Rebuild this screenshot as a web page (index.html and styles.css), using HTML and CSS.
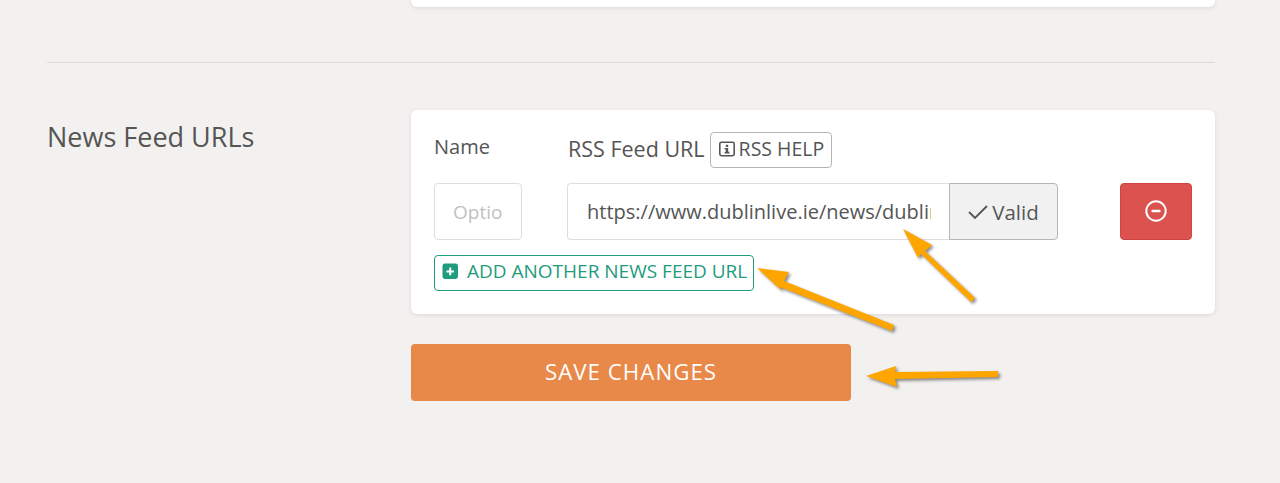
FILE: index.html
```html
<!DOCTYPE html>
<html lang="en">
<head>
    <meta charset="UTF-8">
    <meta name="viewport" content="width=device-width, initial-scale=1.0">
    <title>News Feed URLs</title>
    <link rel="stylesheet" href="styles.css">
</head>
<body>
    <div class="container">
        <div class="card-stub"></div>
        <hr class="divider">

        <div class="section">
            <h2 class="section-title">News Feed URLs</h2>

            <div class="section-body">
                <div class="card">
                    <div class="feed-grid">
                        <label class="field-label" for="feedName">Name</label>
                        <div class="url-label-row">
                            <label class="field-label url-label" for="feedUrl">RSS Feed URL</label>
                            <button class="btn-help" type="button">
                                <svg class="icon" width="16" height="16" viewBox="0 0 16 16">
                                    <rect x="0.8" y="1.3" width="14.4" height="13.4" rx="1.6" fill="none" stroke="currentColor" stroke-width="1.6"/>
                                    <rect x="6.8" y="3.8" width="2.4" height="2.2" fill="currentColor"/>
                                    <path d="M5.6 7h3.6v3.8h1.2v1.6H5.6v-1.6h1.2V8.6H5.6z" fill="currentColor"/>
                                </svg>
                                RSS HELP
                            </button>
                        </div>
                        <div></div>

                        <input class="text-input name-input" id="feedName" type="text" placeholder="Optional">
                        <div class="url-group">
                            <input class="text-input url-input" id="feedUrl" type="text" value="https://www.dublinlive.ie/news/dublin-news/?service=rss">
                            <span class="valid-tag">
                                <svg class="icon" width="20" height="16" viewBox="0 0 20 16">
                                    <path d="M1 8l6 6L19 2" fill="none" stroke="currentColor" stroke-width="1.8"/>
                                </svg>
                                Valid
                            </span>
                        </div>
                        <button class="btn-remove" type="button" aria-label="Remove">
                            <svg width="24" height="24" viewBox="0 0 24 24">
                                <circle cx="12" cy="12" r="9.7" fill="none" stroke="currentColor" stroke-width="2"/>
                                <rect x="7.5" y="10.8" width="9" height="2.4" rx="0.6" fill="currentColor"/>
                            </svg>
                        </button>
                    </div>

                    <button class="btn-add" type="button">
                        <svg class="icon" width="16" height="16" viewBox="0 0 16 16">
                            <rect x="0.5" y="0.5" width="15.5" height="15.5" rx="2.4" fill="currentColor"/>
                            <path d="M7.2 4.6h2v2.8H12v2H9.2v2.8h-2V9.4H4.4v-2h2.8z" fill="#fff"/>
                        </svg>
                        ADD ANOTHER NEWS FEED URL
                    </button>
                </div>

                <button class="btn-save" type="button">SAVE CHANGES</button>
            </div>
        </div>
    </div>

    <!-- annotation arrows drawn over the screenshot -->
    <svg class="arrows" width="1280" height="483" viewBox="0 0 1280 483">
        <polygon points="903,229 932,245 925,251 975,298 971,302 921,254 918,258"/>
        <polygon points="757,268 789,272 784,281 894,325 892,331 780,287 782,291"/>
        <polygon points="866,376 896,366 895,372 998,371 998,377 895,379 897,387"/>
    </svg>
</body>
</html>
```

FILE: styles.css
```css
* {
    box-sizing: border-box;
}
body {
    margin: 0;
    height: 483px;
    overflow: hidden;
    background-color: #f2f1ef;
    color: #555;
    font-family: "Open Sans", Arial, sans-serif;
}
button, input {
    font-family: inherit;
}
.container {
    width: 1168px;
    margin-left: 47px;
}
.card-stub {
    height: 7px;
    margin-left: 364px;
    background-color: white;
    border-radius: 0 0 6px 6px;
    box-shadow: 0 1px 4px rgba(0, 0, 0, 0.1);
}
.divider {
    height: 1px;
    margin: 55px 0 47px;
    border: none;
    background-color: #dcdcdc;
}
.section {
    display: flex;
}
.section-title {
    width: 364px;
    margin: 12px 0 0;
    font-size: 27px;
    font-weight: 400;
    line-height: 30px;
}
.section-body {
    width: 804px;
}
.card {
    padding: 22px 23px 23px;
    background-color: white;
    border-radius: 6px;
    box-shadow: 0 1px 4px rgba(0, 0, 0, 0.1);
}
.feed-grid {
    display: grid;
    grid-template-columns: 88px 491px 1fr;
    column-gap: 45px;
    row-gap: 15px;
}
.field-label {
    font-size: 20px;
    line-height: 30px;
}
.url-label-row {
    display: flex;
    align-items: center;
    gap: 5px;
}
.url-label {
    margin: 0 0 3px 1px;
    font-size: 21.5px;
}
.icon {
    flex-shrink: 0;
}
.btn-help {
    display: flex;
    align-items: center;
    gap: 4px;
    width: 122px;
    height: 36px;
    padding: 0 0 3px 8px;
    background-color: white;
    border: 1px solid #b5b5b5;
    border-radius: 4px;
    color: #555;
    font-size: 19.5px;
    white-space: nowrap;
}
.text-input {
    width: 100%;
    height: 57px;
    padding: 0 18px 0 19px;
    border: 1px solid #dedede;
    border-radius: 4px;
    color: #555;
    font-size: 20px;
}
.name-input {
    padding-left: 18px;
    font-size: 19px;
}
.text-input::placeholder {
    color: #c2bfbd;
}
.url-group {
    display: flex;
}
.url-input {
    width: 382px;
    border-right: none;
    border-radius: 4px 0 0 4px;
}
.valid-tag {
    display: flex;
    align-items: center;
    justify-content: center;
    gap: 4px;
    width: 109px;
    background-color: #f1f1f1;
    border: 1px solid #b5b5b5;
    border-radius: 0 4px 4px 0;
    font-size: 20.5px;
}
.btn-remove {
    justify-self: end;
    display: flex;
    align-items: center;
    justify-content: center;
    width: 72px;
    height: 57px;
    padding: 0 0 2px;
    background-color: #db524e;
    border: 1px solid #d04541;
    border-radius: 4px;
    color: white;
}
.btn-add {
    display: flex;
    align-items: center;
    gap: 9px;
    width: 320px;
    height: 36px;
    margin-top: 15px;
    padding: 0 7px 4px;
    background-color: white;
    border: 1px solid #1f9b7d;
    border-radius: 4px;
    color: #1f9b7d;
    font-size: 19px;
    white-space: nowrap;
}
.btn-save {
    display: block;
    width: 440px;
    height: 57px;
    margin-top: 30px;
    padding-bottom: 4px;
    background-color: #e8894a;
    border: none;
    border-radius: 4px;
    color: white;
    font-size: 22.3px;
    letter-spacing: 1px;
}
.arrows {
    position: absolute;
    top: 0;
    left: 0;
    fill: #ffa500;
    filter: drop-shadow(2px 2px 1.5px rgba(0, 0, 0, 0.45));
}
```
